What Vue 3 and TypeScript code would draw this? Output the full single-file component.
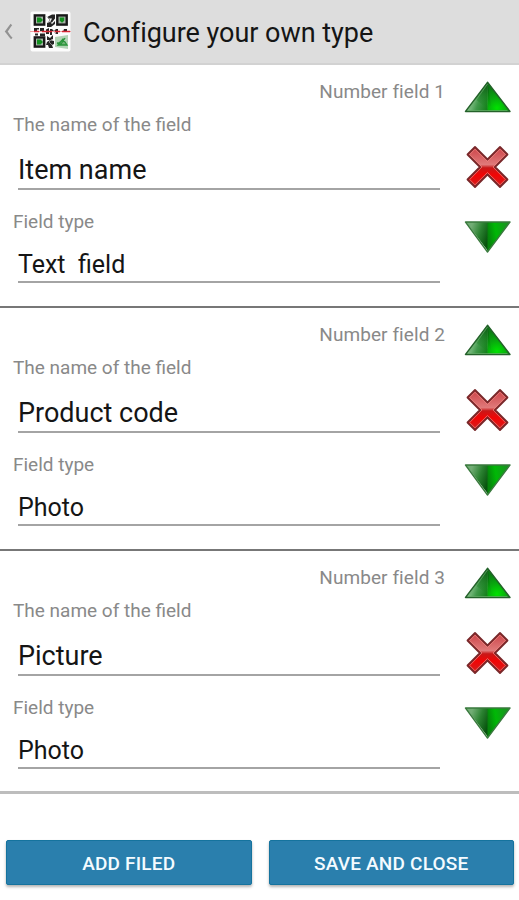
<script setup lang="ts">
interface Field {
  id: number
  name: string
  type: string
}

const fields: Field[] = [
  { id: 1, name: 'Item name', type: 'Text  field' },
  { id: 2, name: 'Product code', type: 'Photo' },
  { id: 3, name: 'Picture', type: 'Photo' },
]
</script>

<template>
  <div class="screen">
    <svg class="defs" width="0" height="0" aria-hidden="true">
      <defs>
        <linearGradient id="leftFace" gradientUnits="userSpaceOnUse" x1="4" y1="22" x2="25" y2="29">
          <stop offset="0" stop-color="#9bcf9e" />
          <stop offset="0.45" stop-color="#40984a" />
          <stop offset="1" stop-color="#0c7c12" />
        </linearGradient>
        <linearGradient id="peakShade" x1="0" y1="0" x2="0" y2="1">
          <stop offset="0" stop-color="#05470b" stop-opacity="0.85" />
          <stop offset="0.55" stop-color="#066b0d" stop-opacity="0.4" />
          <stop offset="1" stop-color="#0a8010" stop-opacity="0" />
        </linearGradient>
        <radialGradient id="rightFace" gradientUnits="userSpaceOnUse" cx="33" cy="28" r="21">
          <stop offset="0" stop-color="#00e300" />
          <stop offset="0.45" stop-color="#08ad0d" />
          <stop offset="1" stop-color="#0c7a14" />
        </radialGradient>
        <linearGradient id="downLeft" gradientUnits="userSpaceOnUse" x1="6" y1="10" x2="25" y2="17">
          <stop offset="0" stop-color="#72ad75" />
          <stop offset="0.5" stop-color="#2b8231" />
          <stop offset="1" stop-color="#07520d" />
        </linearGradient>
        <linearGradient id="downRight" gradientUnits="userSpaceOnUse" x1="24" y1="14" x2="42" y2="11">
          <stop offset="0" stop-color="#06850c" />
          <stop offset="0.45" stop-color="#00b806" />
          <stop offset="1" stop-color="#159a1c" />
        </linearGradient>
        <linearGradient id="crossFill" x1="0" y1="0" x2="0" y2="1">
          <stop offset="0" stop-color="#cc4247" />
          <stop offset="0.44" stop-color="#e07a7a" />
          <stop offset="0.52" stop-color="#c81818" />
          <stop offset="0.7" stop-color="#f20505" />
          <stop offset="1" stop-color="#cf2020" />
        </linearGradient>
      </defs>
    </svg>

    <header class="bar">
      <svg class="back" width="9" height="18" viewBox="0 0 9 18">
        <path d="M7.4 1.5C5 4 4.5 6 2.2 8.5 4.5 11 5 13 7.8 15.5" fill="none" stroke="#929292" stroke-width="2.2" />
      </svg>
      <svg class="logo" width="42" height="42" viewBox="0 0 42 42">
        <rect x="0.5" y="0.5" width="40" height="40" rx="2" fill="#fcfcfc" />
        <g fill="#a9b5aa" stroke="#181818" stroke-width="2.4">
          <rect x="4.8" y="4.4" width="9.4" height="9.2" />
          <rect x="27.3" y="4.4" width="9.4" height="9.2" />
          <rect x="4.8" y="26.4" width="9.4" height="9.2" />
        </g>
        <g fill="#12901f">
          <path d="M7 6.5h3.5L13 9l-2.5 2.5H7z" />
          <path d="M29.8 6.5h4.4v3.2l-2.2 2-2.2-2z" />
          <path d="M7 28.5h3.5L13 31l-2.5 2.5H7z" />
        </g>
        <g fill="#252525">
          <path d="M18 5.5 22 3.5h3v4l-3 4h-2l2-4h-4zM17 12l3-1 2 2 3-3v3l-4 3h-4z" />
          <path d="M4 17h5v1.5H7V21H4zM10 17h4v4h-4zM16 18.5l3-1.5v6h-3zM20 18h2l2 2 2-2h2v5h-2v-2h-4v3h-2zM34 18h3v3h-4z" />
          <path d="M5 22.5h3v2H5zM10 22.5h5V25h-5zM17 25l3 2 3-3v4l-2 1h-4zM17 31l3-2 4 1v3l-2 1 1 3h-4l-1-3h-2z" />
        </g>
        <path d="M17 5.5 20 9l-2 3m4 16-3 3 3 3m2-14 2 3" fill="none" stroke="#888" stroke-width="1" />
        <path fill="#b3d4b6" d="m25 26 13-2v14l-13-2z" />
        <path d="m28 34 5-6 4 6zm-1-2 4 1 4-6" fill="#70b277" stroke="#279439" stroke-width="1.3" />
        <path d="M0 20.5h41" stroke="#ef9da0" stroke-width="1" />
        <path d="M4 20.5h5m3 0h10m3 0h5m2 0h8" stroke="#d52733" stroke-width="1.5" />
      </svg>
      <h1 class="title">Configure your own type</h1>
    </header>

    <main>
      <section v-for="field in fields" :key="field.id" class="field">
        <div class="details">
          <div class="number">Number field {{ field.id }}</div>
          <div class="label name-label">The name of the field</div>
          <div class="value name-value"><span>{{ field.name }}</span></div>
          <div class="label type-label">Field type</div>
          <div class="value type-value"><span>{{ field.type }}</span></div>
        </div>
        <div class="actions">
          <svg width="48" height="34" viewBox="0 0 48 34">
            <path d="M23.5 2 2 31.5h22z" fill="url(#leftFace)" />
            <path d="M23.5 2v29.5H46z" fill="url(#rightFace)" />
            <path d="M23.5 2 11 19l12 9 4-2z" fill="url(#peakShade)" />
            <path d="M23.5 2.3 1.5 31.5H46z" fill="none" stroke="#24622a" stroke-width="1.4" stroke-linejoin="round" />
            <path d="m23.5 4-19 26.5h39" fill="none" stroke="#68ad6c" stroke-width="0.7" />
          </svg>
          <svg class="cross" width="44" height="44" viewBox="0 0 44 44">
            <path
              d="M9 2 21.5 14.5 34 2l7.5 7.5L29 22l12.5 12.5L34 42 21.5 29.5 9 42l-7.5-7.5L14 22 1.5 9.5z"
              fill="url(#crossFill)"
              stroke="#79282a"
              stroke-width="1.8"
              stroke-linejoin="round"
            />
            <path d="m9 4.2 12.5 12.3L34 4.2l5.3 5.3L27 22l12.3 12.5L34 39.8 21.5 27.5 9 39.8l-5.3-5.3L16 22 3.7 9.5z" fill="none" stroke="#f28b85" stroke-width="0.9" opacity="0.75" />
          </svg>
          <svg class="down" width="48" height="34" viewBox="0 0 48 34">
            <path d="M2 2h22v29z" fill="url(#downLeft)" />
            <path d="M23.5 2H46L23.5 32z" fill="url(#downRight)" />
            <path d="M1.5 2H46L23.5 32z" fill="none" stroke="#397a3d" stroke-width="1.4" stroke-linejoin="round" />
          </svg>
        </div>
      </section>
    </main>

    <footer class="footer">
      <button type="button">ADD FILED</button>
      <button type="button">SAVE AND CLOSE</button>
    </footer>
  </div>
</template>

<style>
body {
  margin: 0;
  background: #fff;
}
</style>

<style scoped>
.screen {
  width: 519px;
  height: 900px;
  overflow: hidden;
  display: flex;
  flex-direction: column;
  background: #fff;
  font-family: Roboto, sans-serif;
  color: #151515;
}
.defs {
  position: absolute;
}
.bar {
  flex: none;
  box-sizing: border-box;
  height: 65px;
  display: flex;
  align-items: center;
  background: #ddd;
  border-bottom: 2px solid #d2d2d2;
  padding-left: 4px;
}
.logo {
  margin-left: 17px;
}
.title {
  margin: 3px 0 0 11px;
  font-size: 27px;
  font-weight: 400;
  line-height: 36px;
  letter-spacing: -0.03px;
  white-space: nowrap;
}
.field {
  box-sizing: border-box;
  height: 243px;
  display: flex;
  border-bottom: 2px solid #777;
}
.field:last-child {
  border-bottom: 3px solid #bdbdbd;
}
.details {
  width: 445px;
  flex: none;
}
.number,
.label {
  font-size: 19px;
  line-height: 24px;
  color: #898989;
  white-space: nowrap;
}
.number {
  margin-top: 15px;
  text-align: right;
  letter-spacing: 0.08px;
}
.label {
  padding-left: 13px;
}
.name-label {
  margin-top: 9px;
}
.type-label {
  margin-top: 20px;
}
.value {
  margin-left: 18px;
  width: 422px;
  box-sizing: border-box;
  border-bottom: 2px solid #a4a4a4;
  line-height: 34px;
  white-space: pre;
}
.name-value {
  height: 43px;
  margin-top: 10px;
  padding-top: 6px;
  font-size: 27px;
}
.type-value {
  height: 40px;
  margin-top: 9px;
  padding-top: 5px;
  font-size: 25px;
}
.actions {
  width: 48px;
  margin: 15px 0 0 19px;
  display: flex;
  flex-direction: column;
  align-items: center;
}
.cross {
  margin-top: 31px;
}
.down {
  margin-top: 31px;
}
.footer {
  display: flex;
  gap: 17px;
  padding: 46px 5px 0 6px;
}
button {
  flex: 1;
  height: 45px;
  padding: 2px 0 0;
  border: 1px solid #15739e;
  border-radius: 2px;
  background: #2a7fad;
  box-shadow: 0 2px 3px rgba(0, 0, 0, 0.3);
  color: #f4fbff;
  font: 500 19px Roboto, sans-serif;
  letter-spacing: 0.2px;
}
</style>
